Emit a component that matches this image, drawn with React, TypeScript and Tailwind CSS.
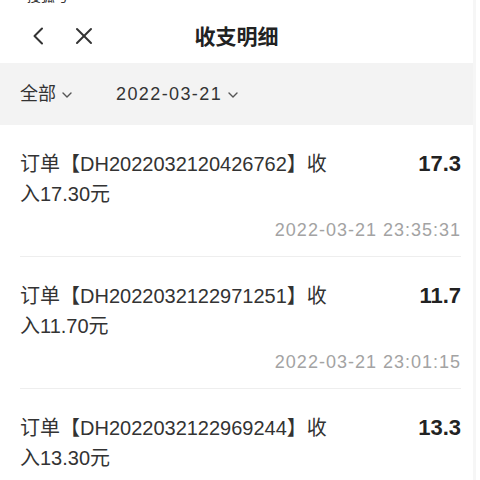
import React from "react";

const items = [
  { id: "DH2022032120426762", money: "17.30", amount: "17.3", time: "2022-03-21 23:35:31" },
  { id: "DH2022032122971251", money: "11.70", amount: "11.7", time: "2022-03-21 23:01:15" },
  { id: "DH2022032122969244", money: "13.30", amount: "13.3", time: "2022-03-21 22:58:40" },
];

function Chevron() {
  return (
    <svg width="10" height="6" viewBox="0 0 10 6" className="ml-[6px] mt-[1px]">
      <polyline points="1,1 5,5 9,1" fill="none" stroke="#555" strokeWidth="1.4" strokeLinecap="round" strokeLinejoin="round" />
    </svg>
  );
}

export default function App() {
  return (
    <div
      className="w-[480px] h-[480px] overflow-hidden bg-white flex"
      style={{ fontFamily: '"Liberation Sans", "Noto Sans CJK SC", sans-serif' }}
    >
      <div className="w-[473px] flex flex-col shrink-0">
        <div className="h-[4px] shrink-0 overflow-hidden pl-[22px]">
          <div className="text-[14px] leading-[14px] -mt-[11px] text-[#333]">‹搜狐号</div>
        </div>
        <div className="h-[59px] shrink-0 pt-[5px] grid grid-cols-[1fr_auto_1fr] items-center">
          <div className="flex items-center pl-[32px]">
            <svg width="12" height="18" viewBox="0 0 12 18">
              <polyline points="10,1.5 2.5,9 10,16.5" fill="none" stroke="#333" strokeWidth="2" strokeLinecap="round" strokeLinejoin="round" />
            </svg>
            <svg width="18" height="18" viewBox="0 0 18 18" className="ml-[31px]">
              <line x1="2" y1="2" x2="16" y2="16" stroke="#333" strokeWidth="2" strokeLinecap="round" />
              <line x1="16" y1="2" x2="2" y2="16" stroke="#333" strokeWidth="2" strokeLinecap="round" />
            </svg>
          </div>
          <div className="text-[21px] font-bold text-[#222] leading-none">收支明细</div>
          <div />
        </div>
        <div className="h-[62px] shrink-0 bg-[#f3f3f3] flex items-center px-5 text-[18px] text-[#333]">
          <div className="flex items-center">
            <span>全部</span>
            <Chevron />
          </div>
          <div className="flex items-center ml-[44px]">
            <span className="tracking-[1.4px]">2022-03-21</span>
            <Chevron />
          </div>
        </div>
        <div className="pl-5 pr-[12px] flex flex-col shrink-0">
          {items.map((it) => (
            <div key={it.id} className="shrink-0 pt-6 pb-[14px] border-b border-[#eeeeee] flex flex-col gap-[9px]">
              <div className="flex justify-between items-start">
                <div className="w-[315px] text-[20px] leading-[30px] text-[#333]">
                  订单【{it.id}】收入{it.money}元
                </div>
                <div className="text-[22px] leading-[30px] font-bold text-[#222]">{it.amount}</div>
              </div>
              <div className="text-right text-[18px] leading-[24px] tracking-[1px] text-[#a3a3a3]">{it.time}</div>
            </div>
          ))}
        </div>
      </div>
      <div className="w-[3px] shrink-0 bg-[#f6f6f6]" />
    </div>
  );
}
